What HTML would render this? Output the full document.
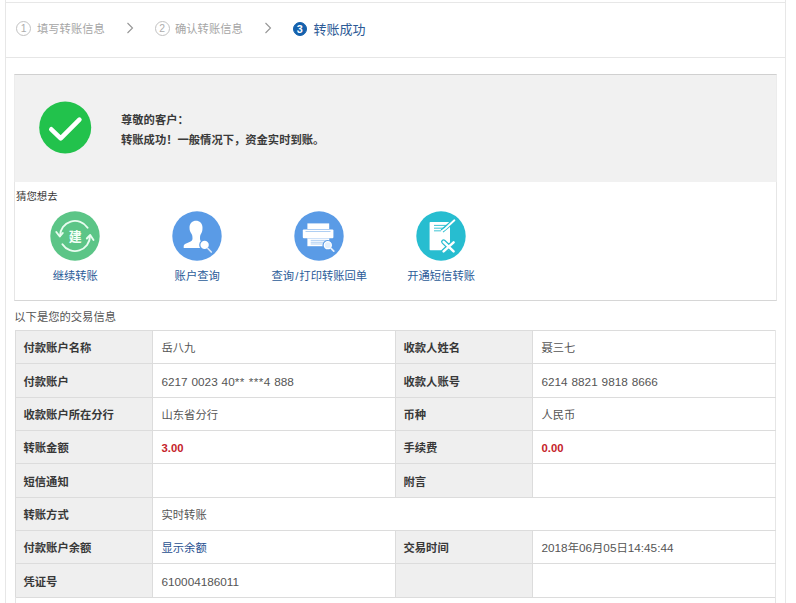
<!DOCTYPE html>
<html lang="zh-CN">
<head>
<meta charset="utf-8">
<title>转账成功</title>
<style>
html,body{margin:0;padding:0;background:#fff;}
body{width:796px;height:603px;overflow:hidden;position:relative;
 font-family:"Liberation Sans","Noto Sans CJK SC",sans-serif;font-size:11.3px;color:#444;}
*{box-sizing:border-box;}
.abs{position:absolute;}
.outer{position:absolute;left:5px;top:-2px;width:781px;height:640px;border:1px solid #e7e7e7;border-top:none;background:#fff;}
.topline{position:absolute;left:5px;top:2px;width:781px;height:1px;background:#e7e7e7;}
.hline{position:absolute;left:6px;width:779px;height:1px;background:#e6e6e6;}
.step{position:absolute;top:18px;height:22px;line-height:22px;white-space:nowrap;}
.num{position:absolute;width:15px;height:15px;border-radius:50%;border:1px solid #c2c2c2;color:#adadad;
 font-size:10.4px;line-height:13px;text-align:center;top:20.9px;}
.num.on{background:#1461ad;border-color:#1461ad;color:#fff;font-weight:bold;font-size:10.8px;width:14.6px;height:14.6px;line-height:12.8px;top:21.9px;}
.stxt{position:absolute;top:18px;line-height:22px;height:22px;color:#a6a6a6;font-size:11.3px;white-space:nowrap;}
.stxt.on{color:#2c5a96;font-size:13px;}
.chev{position:absolute;top:22.4px;width:8px;height:12px;}
.gray{position:absolute;left:14px;top:74px;width:763px;height:108px;background:#f1f1f1;border:1px solid #ececec;border-top-color:#d0d0d0;border-bottom:none;}
.msg{position:absolute;left:121px;font-weight:bold;color:#3a3a3a;font-size:11.3px;line-height:20px;white-space:nowrap;}
.guess{position:absolute;left:14px;top:182px;width:763px;height:119px;border:1px solid #e6e6e6;border-bottom-color:#d6d6d6;border-top:none;background:#fff;}
.glabel{position:absolute;left:16.1px;top:188.5px;line-height:16px;font-size:10.4px;color:#3a3a3a;white-space:nowrap;}
.ico{position:absolute;top:211px;width:50px;height:50px;}
.ilabel{position:absolute;top:267px;width:140px;text-align:center;line-height:18px;color:#2b5c99;font-size:11.3px;white-space:nowrap;}
.info{position:absolute;left:14.3px;top:308px;line-height:18px;color:#555;font-size:11.3px;white-space:nowrap;}
table{position:absolute;left:15px;top:330px;width:761px;border-collapse:collapse;table-layout:fixed;}
td{border:1px solid #dcdcdc;height:33.35px;padding:2px 0 0 8.5px;font-size:11.3px;color:#555;white-space:nowrap;vertical-align:middle;line-height:16px;}
td.l{background:#efefef;font-weight:bold;color:#383838;padding-left:7.5px;}
.n{font-size:11.75px;word-spacing:.65px;}
.n i{font-style:normal;letter-spacing:.45px;}
td:last-child{border-right-color:#e6e6e6;}
td .red{color:#c5222a;font-weight:bold;}
td .lnk{color:#1f4f8f;}
.below{position:absolute;left:15px;top:597px;width:761px;height:40px;border:1px solid #e4e4e4;border-top:none;}
</style>
</head>
<body>
<div class="outer"></div>
<div class="topline"></div>
<div class="hline" style="top:57px"></div>

<!-- steps -->
<div class="num" style="left:16.2px">1</div>
<div class="stxt" style="left:37px">填写转账信息</div>
<svg class="chev" style="left:126.4px" viewBox="0 0 8 12"><path d="M1.5 1 L6.5 6 L1.5 11" fill="none" stroke="#969696" stroke-width="1.1"/></svg>
<div class="num" style="left:154.6px">2</div>
<div class="stxt" style="left:175px">确认转账信息</div>
<svg class="chev" style="left:263.8px" viewBox="0 0 8 12"><path d="M1.5 1 L6.5 6 L1.5 11" fill="none" stroke="#969696" stroke-width="1.1"/></svg>
<div class="num on" style="left:292.5px">3</div>
<div class="stxt on" style="left:313.4px;top:19.1px">转账成功</div>

<!-- success box -->
<div class="gray"></div>
<svg class="abs" style="left:38px;top:101px;width:54px;height:54px" viewBox="0 0 54 54">
 <circle cx="27.2" cy="26.4" r="26" fill="#22c24c"/>
 <path d="M13.3 28.3 L22.7 37.3 L41.4 18.6" fill="none" stroke="#fff" stroke-width="4.6" stroke-linecap="round" stroke-linejoin="round"/>
</svg>
<div class="msg" style="top:109.7px">尊敬的客户：</div>
<div class="msg" style="top:129.7px">转账成功！一般情况下，资金实时到账。</div>

<!-- guess -->
<div class="guess"></div>
<div class="glabel">猜您想去</div>

<svg class="ico" style="left:50.3px;top:210.6px" viewBox="0 0 50 50">
 <circle cx="25" cy="25" r="24.7" fill="#5cc587"/>
 <path d="M10 25 A15 15 0 0 1 37.6 16.8" fill="none" stroke="#e9fcf0" stroke-width="1.9" stroke-linecap="round"/>
 <path d="M40 25 A15 15 0 0 1 12.4 33.2" fill="none" stroke="#e9fcf0" stroke-width="1.9" stroke-linecap="round"/>
 <path d="M6.300 21 L9.800 25.500 L12.800 22" fill="none" stroke="#e9fcf0" stroke-width="1.9" stroke-linecap="round" stroke-linejoin="round"/>
 <path d="M36.800 27.500 L40.200 24 L43.500 29" fill="none" stroke="#e9fcf0" stroke-width="1.9" stroke-linecap="round" stroke-linejoin="round"/>
 <text x="25.3" y="30" text-anchor="middle" font-family="Noto Sans CJK SC, sans-serif" font-size="13" font-weight="bold" fill="#f3fff7">建</text>
</svg>
<div class="ilabel" style="left:5.3px">继续转账</div>

<svg class="ico" style="left:172.2px;top:211.2px" viewBox="0 0 50 50">
 <circle cx="25" cy="25" r="24.7" fill="#5a9be6"/>
 <path d="M24 9.800 C20.500 9.800 17.500 12.300 17.500 16.500 C17.500 19.500 18.300 21 19.300 22.500 C20.200 24 20.500 25 20.500 27.400 C20.500 29.500 19.500 30.300 17 31.200 C13.500 32.500 11.700 33.200 11.700 35 L11.700 36.900 L36.300 36.900 L36.300 35 C36.300 33.200 34.500 32.500 31 31.200 C28.500 30.300 28 29.500 28 27.400 C28 25 28.300 24 29.200 22.500 C30.200 21 30.500 19.500 30.500 16.500 C30.500 12.300 27.500 9.800 24 9.800 Z" fill="#fff"/>
 <circle cx="32.600" cy="33.900" r="5.400" fill="#5a9be6"/>
 <circle cx="32.600" cy="33.900" r="4.200" fill="#fff"/>
 <path d="M35.900 37.500 L39.300 41" stroke="#dbe9fb" stroke-width="1.700" stroke-linecap="round"/>
</svg>
<div class="ilabel" style="left:127.2px">账户查询</div>

<svg class="ico" style="left:294.3px;top:210.9px" viewBox="0 0 50 50">
 <circle cx="25" cy="25" r="24.7" fill="#5a9be6"/>
 <rect x="13.400" y="12.400" width="21.800" height="5.600" fill="#fff"/>
 <rect x="8.800" y="18.500" width="30.600" height="8.800" rx="1" fill="#fff"/>
 <rect x="11.500" y="20" width="25" height="0.800" fill="#9cc3f1"/>
 <rect x="13.400" y="27.300" width="21.800" height="7.900" fill="#fff"/>
 <rect x="13.400" y="27.100" width="21.800" height="0.700" fill="#c9dff8"/>
 <rect x="16.700" y="28.900" width="17" height="0.800" fill="#9cc3f1"/>
 <rect x="16.700" y="30.800" width="17" height="0.800" fill="#9cc3f1"/>
 <rect x="16.700" y="32.600" width="17" height="0.800" fill="#9cc3f1"/>
 <circle cx="33.800" cy="34.200" r="5.300" fill="#5a9be6"/>
 <circle cx="33.800" cy="34.200" r="3.500" fill="#e3effc" stroke="#fff" stroke-width="1.300"/>
 <path d="M36.800 37.200 L39.800 40.200" stroke="#e6f0fd" stroke-width="1.700" stroke-linecap="round"/>
</svg>
<div class="ilabel" style="left:249.3px">查询<span style="margin:0 1.1px">/</span>打印转账回单</div>

<svg class="ico" style="left:416.1px;top:210.9px" viewBox="0 0 50 50">
 <circle cx="25" cy="25" r="24.7" fill="#27bdd0"/>
 <rect x="13.600" y="11" width="20.400" height="28.300" rx="0.800" fill="#fff"/>
 <rect x="18" y="13.900" width="12.500" height="0.900" fill="#27bdd0"/>
 <rect x="18" y="16.700" width="10.500" height="0.900" fill="#27bdd0"/>
 <rect x="18" y="19.400" width="8" height="0.900" fill="#27bdd0"/>
 <path d="M26 20 L38.400 9.300" stroke="#27bdd0" stroke-width="4.200" stroke-linecap="butt"/>
 <path d="M25.800 20.200 L29.500 17.500 L38.400 9.300" fill="none" stroke="#fff" stroke-width="1.900" stroke-linecap="round"/>
 <path d="M27.600 30.800 L37.600 40.400 M37.600 31.400 L27.600 40.400" stroke="#27bdd0" stroke-width="5" stroke-linecap="round"/>
 <path d="M27.600 30.800 L37.600 40.400 M37.600 31.400 L27.600 40.400" stroke="#fff" stroke-width="2.500" stroke-linecap="round"/>
</svg>
<div class="ilabel" style="left:371.1px">开通短信转账</div>

<div class="info">以下是您的交易信息</div>

<table>
<colgroup><col style="width:137px"><col style="width:243px"><col style="width:137px"><col style="width:243px"></colgroup>
<tr><td class="l">付款账户名称</td><td>岳八九</td><td class="l">收款人姓名</td><td>聂三七</td></tr>
<tr><td class="l">付款账户</td><td><span class="n">6217 0023 40<i>**</i> <i>***</i>4 888</span></td><td class="l">收款人账号</td><td><span class="n">6214 8821 9818 8666</span></td></tr>
<tr><td class="l">收款账户所在分行</td><td>山东省分行</td><td class="l">币种</td><td>人民币</td></tr>
<tr><td class="l">转账金额</td><td><span class="red">3.00</span></td><td class="l">手续费</td><td><span class="red">0.00</span></td></tr>
<tr><td class="l">短信通知</td><td></td><td class="l">附言</td><td></td></tr>
<tr><td class="l">转账方式</td><td colspan="3">实时转账</td></tr>
<tr><td class="l">付款账户余额</td><td><span class="lnk">显示余额</span></td><td class="l">交易时间</td><td><span class="n">2018</span>年<span class="n">06</span>月<span class="n">05</span>日<span class="n">14:45:44</span></td></tr>
<tr><td class="l">凭证号</td><td><span class="n">610004186011</span></td><td class="l"></td><td></td></tr>
</table>
<div class="below"></div>
</body>
</html>
